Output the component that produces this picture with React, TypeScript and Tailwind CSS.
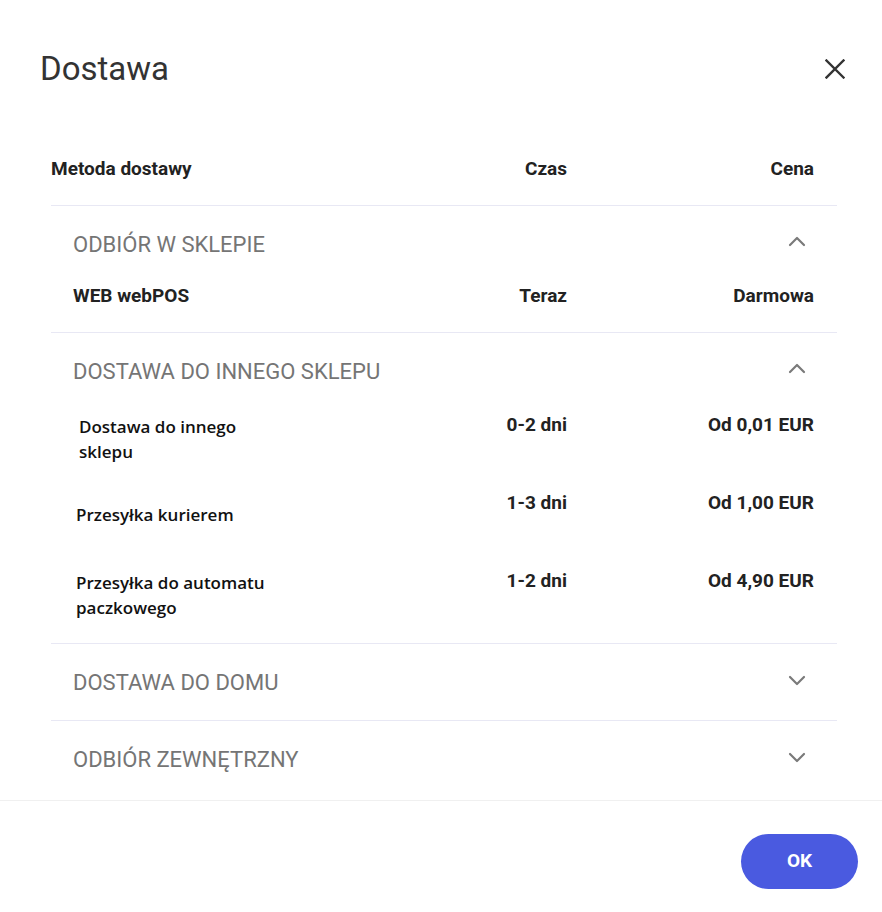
import React from "react";

type Option = { name: string; time: string; price: string; shift?: boolean };
type Section = { title: string; open: boolean; options: Option[]; simple?: boolean };

const sections: Section[] = [
  {
    title: "Odbiór w sklepie",
    open: true,
    simple: true,
    options: [{ name: "WEB webPOS", time: "Teraz", price: "Darmowa" }],
  },
  {
    title: "Dostawa do innego sklepu",
    open: true,
    options: [
      { name: "Dostawa do innego sklepu", time: "0-2 dni", price: "Od 0,01 EUR", shift: true },
      { name: "Przesyłka kurierem", time: "1-3 dni", price: "Od 1,00 EUR" },
      { name: "Przesyłka do automatu paczkowego", time: "1-2 dni", price: "Od 4,90 EUR" },
    ],
  },
  { title: "Dostawa do domu", open: false, options: [] },
  { title: "Odbiór zewnętrzny", open: false, options: [] },
];

function Chevron({ up }: { up: boolean }) {
  return (
    <svg width="20" height="12" viewBox="0 0 20 12" fill="none" className={up ? "" : "rotate-180"}>
      <path d="M3 10 L10 3 L17 10" stroke="#7a7a7a" strokeWidth="2.2" strokeLinecap="round" strokeLinejoin="round" />
    </svg>
  );
}

function SectionBlock({ section, last }: { section: Section; last: boolean }) {
  return (
    <div className={last ? "" : "border-b border-[#e8e8f4]"}>
      <div className="flex h-[76px] items-center justify-between pl-[22px] pr-[30px]">
        <span className="text-[22px] uppercase text-[#757575]">{section.title}</span>
        <span className={section.open ? "-mt-[6px]" : "-mt-[2px]"}>
          <Chevron up={section.open} />
        </span>
      </div>
      {section.open && section.simple && (
        <div className="pb-[22px]">
          {section.options.map((o) => (
            <div key={o.name} className="grid h-[28px] grid-cols-[1fr_150px_270px] items-center pl-[22px] text-[19px] font-bold text-[#222]">
              <span>{o.name}</span>
              <span className="text-right">{o.time}</span>
              <span className="pr-[23px] text-right">{o.price}</span>
            </div>
          ))}
        </div>
      )}
      {section.open && !section.simple && (
        <div className="flex flex-col gap-[28px] pb-[28px]">
          {section.options.map((o) => (
            <div key={o.name} className="grid h-[50px] grid-cols-[1fr_150px_270px]">
              <div className={`flex items-center pt-[5px] ${o.shift ? "pl-[28px]" : "pl-[25px]"}`}>
                <span className="w-[205px] font-['Open_Sans',sans-serif] text-[17px] font-semibold leading-[25px] text-[#111]">
                  {o.name}
                </span>
              </div>
              <span className="pt-[3px] text-right text-[19px] font-bold leading-[25px] text-[#222]">{o.time}</span>
              <span className="pr-[23px] pt-[3px] text-right text-[19px] font-bold leading-[25px] text-[#222]">{o.price}</span>
            </div>
          ))}
        </div>
      )}
    </div>
  );
}

export default function App() {
  return (
    <div className="min-h-[912px] bg-white font-['Roboto',sans-serif]">
      <div className="mt-[40px] flex h-[58px] items-center justify-between pl-[40px] pr-[37px]">
        <h1 className="text-[33px] text-[#333]">Dostawa</h1>
        <button className="flex h-[20px] w-[20px] items-center justify-center">
          <svg width="20" height="20" viewBox="0 0 20 20">
            <path d="M1.5 1.5 L18.5 18.5 M18.5 1.5 L1.5 18.5" stroke="#333" strokeWidth="2.4" strokeLinecap="square" />
          </svg>
        </button>
      </div>

      <div className="mr-[45px] ml-[51px] mt-[35px]">
        <div className="grid h-[73px] grid-cols-[1fr_150px_270px] items-center border-b border-[#e8e8f4] text-[19px] font-bold text-[#222]">
          <span>Metoda dostawy</span>
          <span className="text-right">Czas</span>
          <span className="pr-[23px] text-right">Cena</span>
        </div>
        {sections.map((s, i) => (
          <SectionBlock key={s.title} section={s} last={i === sections.length - 1} />
        ))}
      </div>

      <div className="mt-[3px] flex justify-end border-t border-[#f0f0f0] pr-[24px] pt-[33px]">
        <button className="h-[55px] w-[117px] rounded-full bg-[#4a5ae0] text-[19px] font-bold text-white">OK</button>
      </div>
    </div>
  );
}
